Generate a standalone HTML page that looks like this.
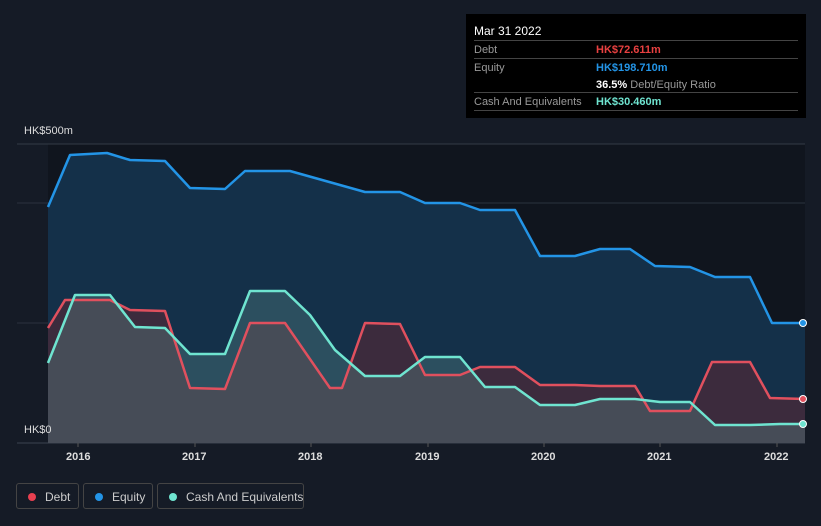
<!DOCTYPE html>
<html><head><meta charset="utf-8"><style>
body{margin:0;width:821px;height:526px;background:#151b26;font-family:"Liberation Sans",sans-serif;overflow:hidden;position:relative}
.tt{position:absolute;left:466px;top:14px;width:340px;height:104px;background:#000;color:#fff;font-size:11px}
.row{position:absolute;left:8px;right:8px;border-top:1px solid #444;height:18px;line-height:18px;color:#999}
.row span{position:absolute;left:122px;font-weight:bold}
.leg{position:absolute;top:483px;height:26px;border:1px solid #444;border-radius:3px;color:#ccc;font-size:12px;line-height:26px;box-sizing:border-box;white-space:nowrap}
.leg i{position:absolute;left:11px;top:9px;width:8px;height:8px;border-radius:50%}
.yr{position:absolute;top:451px;color:#ddd;font-size:11px;font-weight:bold}
</style></head><body>
<svg width="821" height="526" style="position:absolute;left:0;top:0">
<rect x="48" y="144" width="757" height="299" fill="#10151e"/>
<line x1="17" y1="144" x2="805" y2="144" stroke="#333b47"/>
<line x1="17" y1="203" x2="805" y2="203" stroke="#2a323d"/>
<line x1="17" y1="323" x2="805" y2="323" stroke="#2a323d"/>
<line x1="17" y1="443" x2="805" y2="443" stroke="#3a4350"/>
<g stroke-linejoin="round">
<polygon fill="#143049" points="48,443 48,207 70,155 107,153 130,160 165,161 190,188 225,189 245,171 290,171 340,185 365,192 400,192 425,203 460,203 480,210 515,210 540,256 575,256 600,249 630,249 655,266 690,267 715,277 750,277 772,323 805,323 805,443"/>
<polygon fill="#4a2a3a" fill-opacity=".75" points="48,443 48,328 65,300 110,300 130,310 165,311 190,388 225,389 250,323 285,323 330,388 342,388 365,323 400,324 425,375 460,375 480,367 515,367 540,385 575,385 600,386 635,386 650,411 690,411 712,362 750,362 770,398 805,399 805,443"/>
<polygon fill="#5a8a8a" fill-opacity=".35" points="48,443 48,363 75,295 110,295 135,327 165,328 190,354 225,354 250,291 285,291 310,315 335,350 365,376 400,376 425,357 460,357 485,387 515,387 540,405 575,405 600,399 635,399 660,402 690,402 715,425 750,425 780,424 805,424 805,443"/>
<polyline fill="none" stroke="#2394e6" stroke-width="2.5" points="48,207 70,155 107,153 130,160 165,161 190,188 225,189 245,171 290,171 340,185 365,192 400,192 425,203 460,203 480,210 515,210 540,256 575,256 600,249 630,249 655,266 690,267 715,277 750,277 772,323 805,323"/>
<polyline fill="none" stroke="#e0505e" stroke-width="2.5" points="48,328 65,300 110,300 130,310 165,311 190,388 225,389 250,323 285,323 330,388 342,388 365,323 400,324 425,375 460,375 480,367 515,367 540,385 575,385 600,386 635,386 650,411 690,411 712,362 750,362 770,398 805,399"/>
<polyline fill="none" stroke="#6fe4d0" stroke-width="2.5" points="48,363 75,295 110,295 135,327 165,328 190,354 225,354 250,291 285,291 310,315 335,350 365,376 400,376 425,357 460,357 485,387 515,387 540,405 575,405 600,399 635,399 660,402 690,402 715,425 750,425 780,424 805,424"/>
</g>
<circle cx="803" cy="323" r="3.5" fill="#2394e6" stroke="#fff" stroke-width="1"/>
<circle cx="803" cy="399" r="3.5" fill="#e0505e" stroke="#fff" stroke-width="1"/>
<circle cx="803" cy="424" r="3.5" fill="#6fe4d0" stroke="#fff" stroke-width="1"/>
<g stroke="#555"><line x1="78" y1="443" x2="78" y2="447"/><line x1="195" y1="443" x2="195" y2="447"/><line x1="311" y1="443" x2="311" y2="447"/><line x1="428" y1="443" x2="428" y2="447"/><line x1="544" y1="443" x2="544" y2="447"/><line x1="660" y1="443" x2="660" y2="447"/><line x1="777" y1="443" x2="777" y2="447"/></g>
</svg>
<div style="position:absolute;left:24px;top:125px;color:#ddd;font-size:11px">HK$500m</div>
<div style="position:absolute;left:24px;top:424px;color:#ddd;font-size:11px">HK$0</div>
<div class="yr" style="left:66px">2016</div><div class="yr" style="left:182px">2017</div><div class="yr" style="left:298px">2018</div><div class="yr" style="left:415px">2019</div><div class="yr" style="left:531px">2020</div><div class="yr" style="left:647px">2021</div><div class="yr" style="left:764px">2022</div>
<div class="tt">
<div style="position:absolute;left:8px;top:10px;font-size:12px">Mar 31 2022</div>
<div class="row" style="top:26px">Debt<span style="color:#e84040">HK$72.611m</span></div>
<div class="row" style="top:44px">Equity<span style="color:#2394e6">HK$198.710m</span></div>
<div style="position:absolute;left:130px;top:62px;line-height:18px;color:#999"><b style="color:#fff">36.5%</b> Debt/Equity Ratio</div>
<div class="row" style="top:78px">Cash And Equivalents<span style="color:#6fe4d0">HK$30.460m</span></div>
<div style="position:absolute;left:8px;right:8px;top:96px;border-top:1px solid #444"></div>
</div>
<div class="leg" style="left:16px;width:63px"><i style="background:#e84050"></i><span style="position:absolute;left:28px">Debt</span></div>
<div class="leg" style="left:83px;width:70px"><i style="background:#2394e6"></i><span style="position:absolute;left:28px">Equity</span></div>
<div class="leg" style="left:157px;width:147px"><i style="background:#6fe4d0"></i><span style="position:absolute;left:28px">Cash And Equivalents</span></div>
</body></html>
